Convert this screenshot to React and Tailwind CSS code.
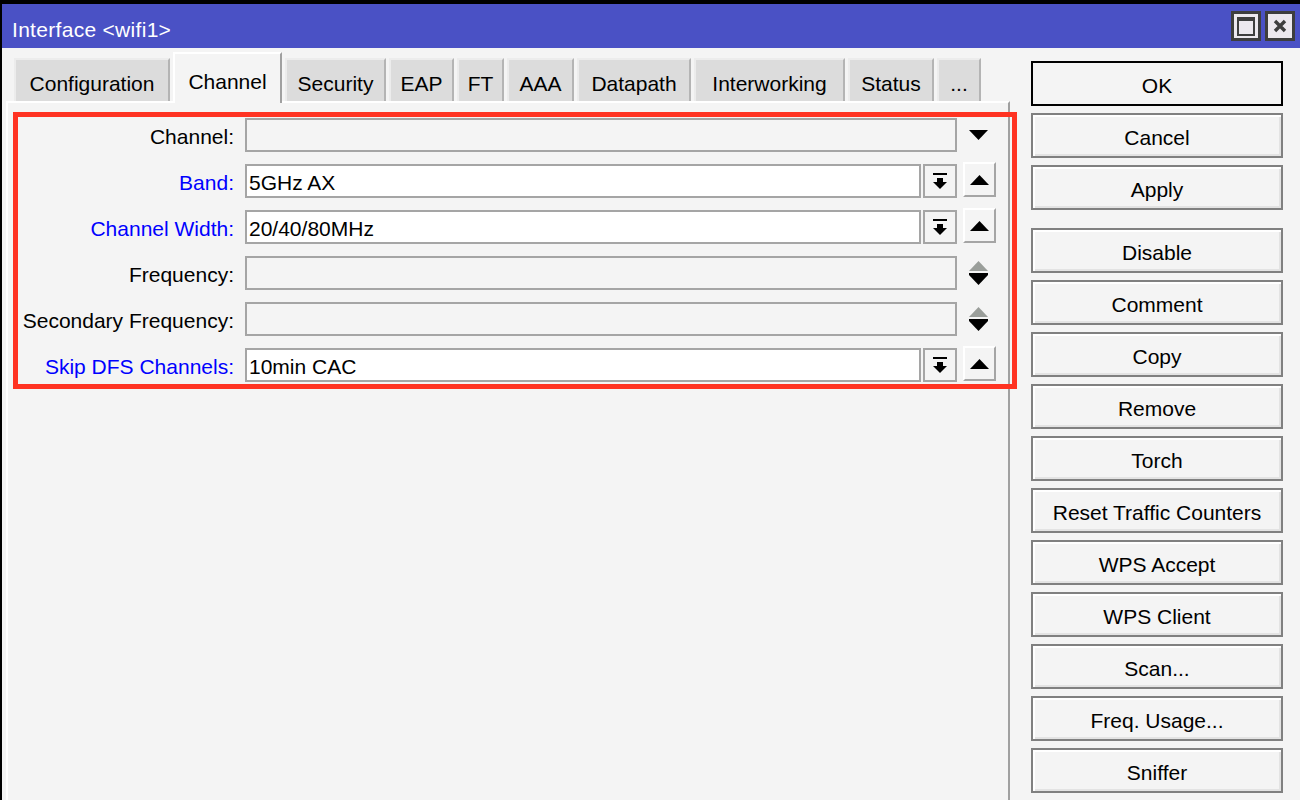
import React from "react";

const tabs = [
  { label: "Configuration", w: "w-[156px]" },
  { label: "Channel", w: "w-[109px]", active: true },
  { label: "Security", w: "w-[101px]" },
  { label: "EAP", w: "w-[65px]" },
  { label: "FT", w: "w-[47px]" },
  { label: "AAA", w: "w-[67px]" },
  { label: "Datapath", w: "w-[114px]" },
  { label: "Interworking", w: "w-[151px]" },
  { label: "Status", w: "w-[86px]" },
  { label: "...", w: "w-[44px]" },
];

// kind: "drop" = empty combo with a plain arrow, "spin" = disabled spinner,
// "select" = value + dropdown button + remove (up) button
const rows = [
  { label: "Channel:", kind: "drop" },
  { label: "Band:", kind: "select", value: "5GHz AX", blue: true },
  { label: "Channel Width:", kind: "select", value: "20/40/80MHz", blue: true },
  { label: "Frequency:", kind: "spin" },
  { label: "Secondary Frequency:", kind: "spin" },
  { label: "Skip DFS Channels:", kind: "select", value: "10min CAC", blue: true },
];

const buttons = [
  "OK",
  "Cancel",
  "Apply",
  "Disable",
  "Comment",
  "Copy",
  "Remove",
  "Torch",
  "Reset Traffic Counters",
  "WPS Accept",
  "WPS Client",
  "Scan...",
  "Freq. Usage...",
  "Sniffer",
];

const DownArrow = () => (
  <svg width="19" height="10" viewBox="0 0 19 10">
    <polygon points="0,0 19,0 9.5,10" fill="#000" />
  </svg>
);

const UpArrow = () => (
  <svg width="19" height="10" viewBox="0 0 19 10">
    <polygon points="0,10 19,10 9.5,0" fill="#000" />
  </svg>
);

const SpinIcon = () => (
  <svg width="19" height="24" viewBox="0 0 19 24">
    <polygon points="0,10 19,10 9.5,0" fill="#9a9e9a" />
    <rect x="0" y="12" width="19" height="2" fill="#000" />
    <polygon points="0,14 19,14 9.5,24" fill="#000" />
  </svg>
);

const DropIcon = () => (
  <svg width="14" height="17" viewBox="0 0 14 17">
    <rect x="0" y="0" width="14" height="2" fill="#000" />
    <rect x="4" y="5" width="6" height="4" fill="#000" />
    <polygon points="0,9 14,9 7,16" fill="#000" />
  </svg>
);

const FormRow = ({ row }) => {
  return (
    <div className="flex items-center h-[46px]">
      <div
        className={`w-[226px] text-right pt-[3px] ${row.blue ? "text-[#0000ff]" : "text-black"}`}
      >
        {row.label}
      </div>
      <div className="ml-[11px] flex items-center">
        {row.kind === "select" ? (
          <>
            <div className="w-[676px] h-[34px] border-2 border-[#a5a5a5] bg-white flex items-center pl-[2px] pt-[3px] text-black">
              {row.value}
            </div>
            <div className="ml-[2px] w-[34px] h-[34px] border-2 border-[#a5a5a5] bg-[#f4f4f4] flex items-center justify-center">
              <DropIcon />
            </div>
            <div className="ml-[6px] w-[33px] h-[35px] -mt-[3px] border-t-2 border-l-2 border-white border-b-2 border-r-2 border-b-[#a5a5a5] border-r-[#a5a5a5] bg-[#f4f4f4] flex items-center justify-center">
              <UpArrow />
            </div>
          </>
        ) : (
          <>
            <div className="w-[712px] h-[34px] border-2 border-[#a5a5a5] bg-[#f4f4f4]" />
            <div className="w-[43px] flex items-center justify-center">
              {row.kind === "drop" ? <DownArrow /> : <SpinIcon />}
            </div>
          </>
        )}
      </div>
    </div>
  );
};

const App = () => {
  return (
    <div
      className="relative w-[1300px] h-[800px] overflow-hidden bg-[#f4f4f4] border-l-2 border-t-4 border-black flex flex-col text-[21px] leading-none"
      style={{ fontFamily: '"Liberation Sans", Arial, sans-serif' }}
    >
      {/* title bar */}
      <div className="h-[44px] shrink-0 bg-[#4a51c5] flex items-center justify-between pl-[10px] pr-[5px]">
        <span className="text-white pt-[6px] tracking-[0.3px]">Interface &lt;wifi1&gt;</span>
        <div className="flex gap-[4px]">
          <div className="w-[30px] h-[30px] border-[3px] border-[#3e3e3e] bg-[#ece8ee] flex items-center justify-center">
            <div className="w-[18px] h-[19px] border-2 border-t-4 border-[#3e3e3e]" />
          </div>
          <div className="w-[30px] h-[30px] border-[3px] border-[#3e3e3e] bg-[#ece8ee] flex items-center justify-center">
            <svg width="14" height="14" viewBox="0 0 14 14">
              <path d="M2 2 L12 12 M12 2 L2 12" stroke="#3e3e3e" strokeWidth="3.4" />
            </svg>
          </div>
        </div>
      </div>

      <div className="flex flex-1 min-h-0">
        {/* left: tabs + panel */}
        <div className="w-[1008px] flex flex-col">
          <div className="flex items-end gap-[3px] pl-[12px] pt-[4px] h-[53px] shrink-0">
            {tabs.map((t) =>
              t.active ? (
                <div
                  key={t.label}
                  className={`${t.w} h-[51px] -mb-[2px] relative z-10 bg-[#f4f4f4] border-l-2 border-t-2 border-white border-r-2 border-r-[#a0a0a0] flex justify-center pt-[17px] text-black`}
                >
                  {t.label}
                </div>
              ) : (
                <div
                  key={t.label}
                  className={`${t.w} h-[43px] bg-[#dcdcdc] border-l-2 border-t-2 border-[#ececec] border-r-2 border-r-[#b4b4b4] flex items-center justify-center pt-[6px] text-black`}
                >
                  {t.label}
                </div>
              )
            )}
          </div>
          <div className="ml-[4px] flex-1 border-l-2 border-t-2 border-white border-r-2 border-r-[#a0a0a0] pt-[9px]">
            {rows.map((r) => (
              <FormRow key={r.label} row={r} />
            ))}
          </div>
        </div>

        {/* right: action buttons */}
        <div className="pl-[21px] pt-[13px] flex flex-col">
          {buttons.map((b, i) => (
            <div
              key={b}
              className={`w-[252px] h-[45px] flex items-center justify-center pt-[3px] text-black bg-[#f4f4f4] ${
                i === 0
                  ? "border-2 border-black"
                  : "border-2 border-[#808080] shadow-[inset_2px_2px_0_#ffffff,inset_-2px_-2px_0_#e3e3e3]"
              } ${i === 0 ? "" : i === 3 ? "mt-[18px]" : "mt-[7px]"}`}
            >
              {b}
            </div>
          ))}
        </div>
      </div>

      {/* red highlight drawn over the form */}
      <div className="absolute left-[11px] top-[108px] w-[1004px] h-[277px] border-[5px] border-[#ff3322] pointer-events-none" />
    </div>
  );
};

export default App;
